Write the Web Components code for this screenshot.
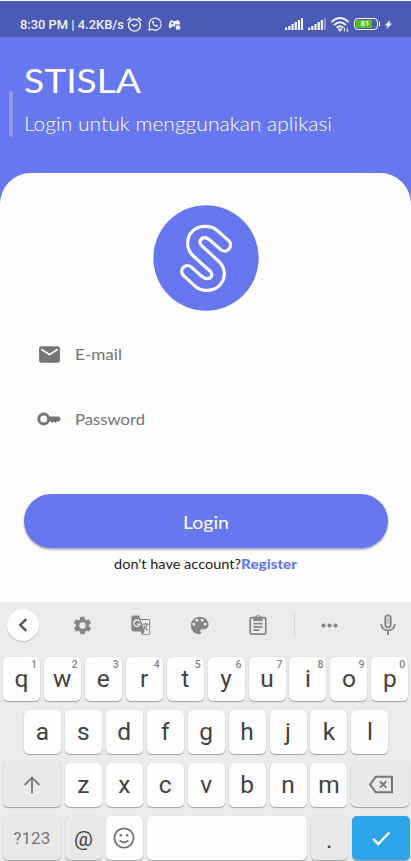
<!DOCTYPE html>
<html lang="id"><head><meta charset="utf-8"><title>STISLA</title>
<style>html,body{margin:0;height:861px;overflow:hidden;background:#fdfdfd;font-family:Roboto,"Liberation Sans",sans-serif}</style>
</head><body><login-screen></login-screen>
<script>
const define=(name,html,setup)=>customElements.define(name,class extends HTMLElement{
  constructor(){super();const t=document.createElement('template');t.innerHTML=html;
    this.attachShadow({mode:'open'}).append(t.content.cloneNode(true));}
  connectedCallback(){if(setup)setup(this,this.shadowRoot);}
});

/* Line of text set to an exact advance width */
define('fit-text',`<style>:host{display:block;line-height:1;white-space:nowrap}svg{display:block;overflow:visible}text{fill:currentColor}</style><svg><text></text></svg>`,
(el,r)=>{const s=r.querySelector('svg'),t=r.querySelector('text'),w=el.getAttribute('w'),h=el.getAttribute('h');
  s.setAttribute('width',w);s.setAttribute('height',h);t.setAttribute('y',h);t.setAttribute('textLength',w);
  t.setAttribute('lengthAdjust','spacingAndGlyphs');t.textContent=el.getAttribute('label');});

const icons={
 mail:'<path d="M20 4H4a2 2 0 0 0-2 2v12a2 2 0 0 0 2 2h16a2 2 0 0 0 2-2V6a2 2 0 0 0-2-2zm0 4-8 5-8-5V6l8 5 8-5z"/>',
 password:'<path fill-rule="evenodd" d="M12.600 9.500a6.400 6.400 0 1 0 0 5H14l1.300 1.500 1.500-1.500 1.500 1.500 1.500-1.500H22l2-2.500-2-2.500zM6.700 15.500a3.500 3.500 0 1 1 0-7 3.500 3.500 0 0 1 0 7z"/>',
 back:'<path d="M15.500 5.500 9 12l6.500 6.500" fill="none" stroke="currentColor" stroke-width="2.600"/>',
 gear:'<path d="M19.4 13c.1-.6.1-1.400 0-2l2.100-1.600a.5.5 0 0 0 .1-.6l-2-3.500a.5.5 0 0 0-.6-.2l-2.500 1a7 7 0 0 0-1.700-1l-.4-2.600a.5.5 0 0 0-.5-.5h-4a.5.5 0 0 0-.5.500l-.4 2.600a7 7 0 0 0-1.700 1l-2.500-1a.5.5 0 0 0-.6.200l-2 3.500a.5.5 0 0 0 .1.600L4.600 11c-.1.600-.1 1.400 0 2l-2.100 1.600a.5.5 0 0 0-.1.600l2 3.500c.1.200.4.300.6.200l2.500-1a7 7 0 0 0 1.700 1l.4 2.600c0 .300.200.500.500.500h4c.300 0 .500-.200.500-.500l.4-2.600a7 7 0 0 0 1.700-1l2.500 1c.2.100.5 0 .6-.2l2-3.500a.5.5 0 0 0-.1-.6zM12 15.600a3.600 3.600 0 1 1 0-7.200 3.600 3.600 0 0 1 0 7.200z"/>',
 translate:'<path fill-rule="evenodd" d="M3.500 1.500H10l1.300 4H20a2 2 0 0 1 2 2V21a2 2 0 0 1-2 2h-7l-1.400-4H3.500a2 2 0 0 1-2-2V3.500a2 2 0 0 1 2-2zM11.700 6.600 16 19l-2.400 3H20a1 1 0 0 0 1-1V7.600a1 1 0 0 0-1-1z"/><path d="M10.600 8.200A3.500 3.500 0 1 0 11 11H7.700" fill="none" stroke="#ebebeb" stroke-width="1.500"/><path d="M14 11h6.500M17 9.500V11m2 0c-.4 2.500-2 4-4 5.600m.2-3.600c1 2 2.500 3.400 4.300 4.800" fill="none" stroke="currentColor" stroke-width="1.200"/>',
 palette:'<path d="M12 2a10 10 0 0 0 0 20 1.700 1.700 0 0 0 1.200-2.800 1.700 1.700 0 0 1 1.300-2.800H17a5.400 5.400 0 0 0 5.400-5.400C22.400 6 17.700 2 12 2zM5.600 12.200a1.700 1.700 0 1 1 0-3.400 1.700 1.700 0 0 1 0 3.400zM9 7.700a1.700 1.700 0 1 1 0-3.400 1.700 1.700 0 0 1 0 3.400zm6 0a1.700 1.700 0 1 1 0-3.400 1.700 1.700 0 0 1 0 3.400zm3.400 4.500a1.700 1.700 0 1 1 0-3.400 1.700 1.700 0 0 1 0 3.400z"/>',
 clip:'<g fill="none" stroke="currentColor" stroke-width="1.900"><rect x="3.500" y="4" width="17" height="18" rx="1.500"/><path d="M7 10.500h10M7 14h10M7 17.500h6.500"/></g><path fill-rule="evenodd" d="M7 3h2.500a2.600 2.600 0 0 1 5 0H17v4.500H7zm5-1a1 1 0 1 0 0 2 1 1 0 0 0 0-2z"/>',
 dots:'<circle cx="3.500" cy="12" r="2.900"/><circle cx="12" cy="12" r="2.900"/><circle cx="20.500" cy="12" r="2.900"/>',
 mic:'<g fill="none" stroke="currentColor" stroke-width="2"><rect x="9" y="1.500" width="6" height="13" rx="3"/><path d="M4.500 11a7.500 7 0 0 0 15 0M12 18v5"/></g><path d="M10 5h4v6h-4z" opacity=".35"/>',
 up:'<path d="M12 21V4M4 12l8-8 8 8" fill="none" stroke="currentColor" stroke-width="2"/>',
 smile:'<g fill="none" stroke="currentColor" stroke-width="2"><circle cx="12" cy="12" r="10.500"/><path d="M7.300 14.500q4.700 4.500 9.400 0"/></g><circle cx="8.500" cy="9" r="1.400"/><circle cx="15.500" cy="9" r="1.400"/>',
 del:'<path d="M7.500 4.500H23v15H7.500L2 12zM11.500 9l6 6m0-6-6 6" fill="none" stroke="currentColor" stroke-width="2"/>',
 check:'<path d="m3.500 13 5.500 5.500L21 6" fill="none" stroke="currentColor" stroke-width="2.600"/>',
 alarm:'<g fill="none" stroke="currentColor" stroke-width="2.200"><circle cx="12" cy="13" r="9.500"/><path d="m7.500 11.500 4 3 5-3M.5 6 6 1M23.500 6 18 1"/></g>',
 whats:'<path d="m1.500 22.500 1.500-6a10.300 10.300 0 1 1 4 4.500z" fill="none" stroke="currentColor" stroke-width="2"/><path d="M8.200 6.500c-3 2.200.8 8.500 5.300 10.200 2 .8 4-.8 3.500-2.400l-2.500-1.300-1.300 1.300c-1.600-.6-3-2-3.600-3.600L10.700 9 9.600 6.500z"/>',
 game:'<path fill-rule="evenodd" d="M5 4h3l1 1.500h6L16 4h3c2 1.500 3.500 5 3.500 8h-9.500v5l-2-2H8l-3 4c-3 .5-4-2-3.500-5S3 6 5 4zm3 4a2 2 0 1 0 0 4 2 2 0 0 0 0-4z"/><path d="M14.500 15h8v6h-8zm1.500 0v-1.500h5V15z"/>',
 wifi:'<g fill="none" stroke="currentColor" stroke-width="2.600"><path d="M.5 9.500q11.500-11 23 0M4 13.500q8-7.500 16 0M7.500 17q4.500-4 9 0"/></g><path d="M9 19q3-2.500 6 0l-3 3.500z"/><path d="M18 22v-5m-1.500 2 1.500-2M21.500 17v5m1.500-2-1.500 2" stroke="currentColor" stroke-width="1.200" fill="none"/>',
 bolt:'<path d="M16 0 2 14.500h7.500L7 24 22 9.500h-7.500z"/>'};
define('ui-icon',`<style>:host{display:block;flex:none}svg{display:block;fill:currentColor;overflow:visible}</style><svg viewBox="0 0 24 24"></svg>`,
(el,r)=>{const s=r.querySelector('svg'),z=el.getAttribute('size')||24;s.setAttribute('width',z);s.setAttribute('height',z);s.innerHTML=icons[el.getAttribute('name')];});

define('signal-bars',`<style>:host{display:block;flex:none}svg{display:block;fill:#eff1fb}.l{opacity:var(--last,1)}</style><svg width="18" height="12"><rect y="9.500" width="2.300" height="2.500"/><rect x="3.200" y="8" width="2.300" height="4"/><rect x="6.400" y="6" width="2.300" height="6"/><rect x="9.600" y="4" width="2.300" height="8"/><rect x="12.800" y="2" width="2.300" height="10"/><rect class="l" x="16" width="2" height="12"/></svg>`);

define('status-bar',`<style>:host{display:flex;align-items:center;height:36px;background:#4b5ab4;color:#eff1fb;box-sizing:border-box;padding:10px 0 0 20px}
fit-text{font:500 13px Roboto;margin-right:3px}.w{margin-left:5.500px}.g{margin-left:6.500px}.sp{flex:1}signal-bars{margin-right:5px}
.bat{box-sizing:border-box;width:24px;height:12px;border:1.500px solid #fff;border-radius:4px;padding:1px;margin-left:5px}
.bat span{display:block;width:16px;height:8px;background:#54bd24;font:700 8px/8px Roboto;text-align:center;padding-left:2px;box-sizing:border-box}
.cap{width:1px;height:4px;background:#fff;margin:0 4px 0 1px}.bolt{margin-right:18px}</style>
<fit-text w="104" h="10" label="8:30 PM | 4.2KB/s"></fit-text><ui-icon name="alarm" size="15"></ui-icon><ui-icon class="w" name="whats" size="14"></ui-icon><ui-icon class="g" name="game" size="13"></ui-icon><span class="sp"></span>
<signal-bars></signal-bars><signal-bars style="--last:.4"></signal-bars><ui-icon name="wifi" size="18"></ui-icon><div class="bat"><span>81</span></div><div class="cap"></div><ui-icon class="bolt" name="bolt" size="9"></ui-icon>`);

define('page-header',`<style>:host{display:block;height:135.500px;background:#6777ef;color:#fff;padding:31.500px 0 0 24px;box-sizing:border-box}
.t{font:400 33px Lato;margin-bottom:24px}.s{font:300 19.500px Lato}
.bar{position:absolute;left:8.500px;top:91px;width:4px;height:46px;border-radius:2px;background:#929be2}</style>
<div class="bar"></div><fit-text class="t" w="117" h="24" label="STISLA"></fit-text><fit-text class="s" w="308" h="14" label="Login untuk menggunakan aplikasi"></fit-text>`);

define('app-logo',`<style>:host{display:flex;justify-content:center}svg{display:block}</style>
<svg width="106" height="106" viewBox="39 30 318 318"><circle cx="198" cy="189" r="158" fill="#6777ef"/><path d="M196 94C164 94 143 115 143 145C143 162 149 173 160 183L211 229C220 239 214 251 201 251C194 251 190 248 185 244L156 218C149 211 141 210 134 214C124 219 122 232 130 241L166 274C176 283 187 286 200 286C230 286 253 264 253 237C253 221 247 210 237 200L184 151C175 141 182 128 195 128C200 128 204 131 208 134L240 162C248 170 259 170 266 163C274 155 273 143 266 137L230 105C220 97 210 94 196 94Z" fill="none" stroke="#fff" stroke-width="9.500" stroke-linejoin="round"/></svg>`);

define('form-field',`<style>:host{display:flex;align-items:center;height:65px;color:#757575;gap:13px;padding-left:37px;font:400 16px Lato}</style><slot></slot>`);

define('login-button',`<style>:host{display:flex;align-items:center;justify-content:center;height:54px;box-sizing:border-box;padding-top:3px;border-radius:27px;background:#6777ef;color:#fff;box-shadow:0 2px 2px #0000003d,0 1px 2px #0002;font:400 17px Lato}</style><slot></slot>`);

define('login-card',`<style>:host{display:block;height:429.500px;box-sizing:border-box;background:#fdfdfd;border-radius:31px 31px 0 0;padding-top:32.500px}
form-field:first-of-type{margin-top:10.500px}login-button{margin:42.500px 23px 0 24px}form-field fit-text{padding-bottom:1px}
p{display:flex;margin:10px 0 0 114px;font:400 14px Lato;color:#222}.r{font-weight:900;color:#6777ef}</style>
<app-logo></app-logo>
<form-field><ui-icon name="mail" size="25"></ui-icon><fit-text w="47" h="12" label="E-mail"></fit-text></form-field>
<form-field><ui-icon name="password" size="24"></ui-icon><fit-text style="margin-left:1px" w="70" h="12" label="Password"></fit-text></form-field>
<login-button><fit-text w="46" h="12" label="Login"></fit-text></login-button>
<p><fit-text w="127" h="11" label="don't have account?"></fit-text><fit-text class="r" w="56" h="11" label="Register"></fit-text></p>`);

define('key-cap',`<style>:host{display:flex;position:relative;box-sizing:border-box;width:37px;height:44px;border-radius:5px;background:#fdfdfd;color:#424242;align-items:center;justify-content:center;font:400 24.500px/28px Roboto;padding-bottom:1px;box-shadow:0 1px 1px #0000004d,0 0 1px #0002}
:host([wide]){width:58px}:host([grey]){background:#e9e9e9;color:#777}:host([space]){width:160px}:host([enter]){background:#2ea5e8;color:#fff}
sup{position:absolute;right:3px;top:1px;font:500 10.500px/13px Roboto;color:#858585}</style><slot></slot><sup></sup>`,
(el,r)=>{const s=r.querySelector('sup');el.hasAttribute('hint')?s.textContent=el.getAttribute('hint'):s.remove();});

define('tool-bar',`<style>:host{display:grid;grid-template-columns:46.500px 71px 46.500px 70px 47px 26px 45px 72px;height:46px;align-items:center;justify-items:center;color:#858585;padding-bottom:9px}
.b{width:32px;height:32px;border-radius:50%;background:#fdfdfd;box-shadow:0 1px 1px #0003;display:grid;place-items:center;color:#555}.d{width:1px;height:24px;background:#d5d5d5}</style>
<div class="b"><ui-icon name="back" size="22"></ui-icon></div><ui-icon name="gear" size="21"></ui-icon><ui-icon name="translate" size="22"></ui-icon><ui-icon name="palette" size="21"></ui-icon><ui-icon name="clip" size="22"></ui-icon><div class="d"></div><ui-icon name="dots" size="17"></ui-icon><ui-icon name="mic" size="22"></ui-icon>`);

const letters=(s,n='')=>[...s].map((c,i)=>`<key-cap ${n?`hint="${n[i]}"`:''}>${c}</key-cap>`).join('');
define('soft-keyboard',`<style>:host{display:block;height:259px;background:#ebebeb;overflow:hidden}.row{display:flex;gap:3.950px;margin:0 0 9px 2.900px}.a{padding-left:21px}
.n{font-size:17px;font-weight:400}.at{font-size:21px;color:#424242!important;padding-top:3px}.dot{color:#424242!important;padding-top:5px}.em{color:#757575}</style>
<tool-bar></tool-bar><div class="row">${letters('qwertyuiop','1234567890')}</div><div class="row a">${letters('asdfghjkl')}</div>
<div class="row"><key-cap wide grey><ui-icon name="up" size="22"></ui-icon></key-cap>${letters('zxcvbnm')}<key-cap wide grey><ui-icon name="del" size="25"></ui-icon></key-cap></div>
<div class="row"><key-cap wide grey class="n">?123</key-cap><key-cap grey class="at">@</key-cap><key-cap class="em"><ui-icon name="smile" size="22"></ui-icon></key-cap><key-cap space></key-cap><key-cap grey class="dot">.</key-cap><key-cap wide enter><ui-icon name="check" size="22"></ui-icon></key-cap></div>`);

define('login-screen',`<style>:host{display:block;width:411px;height:861px;overflow:hidden}.shell{background:#6777ef}.top{background:#fdfdfd;padding-top:1px}</style>
<div class="top"><status-bar></status-bar></div><div class="shell"><page-header></page-header><login-card></login-card></div><soft-keyboard></soft-keyboard>`);
</script></body></html>
